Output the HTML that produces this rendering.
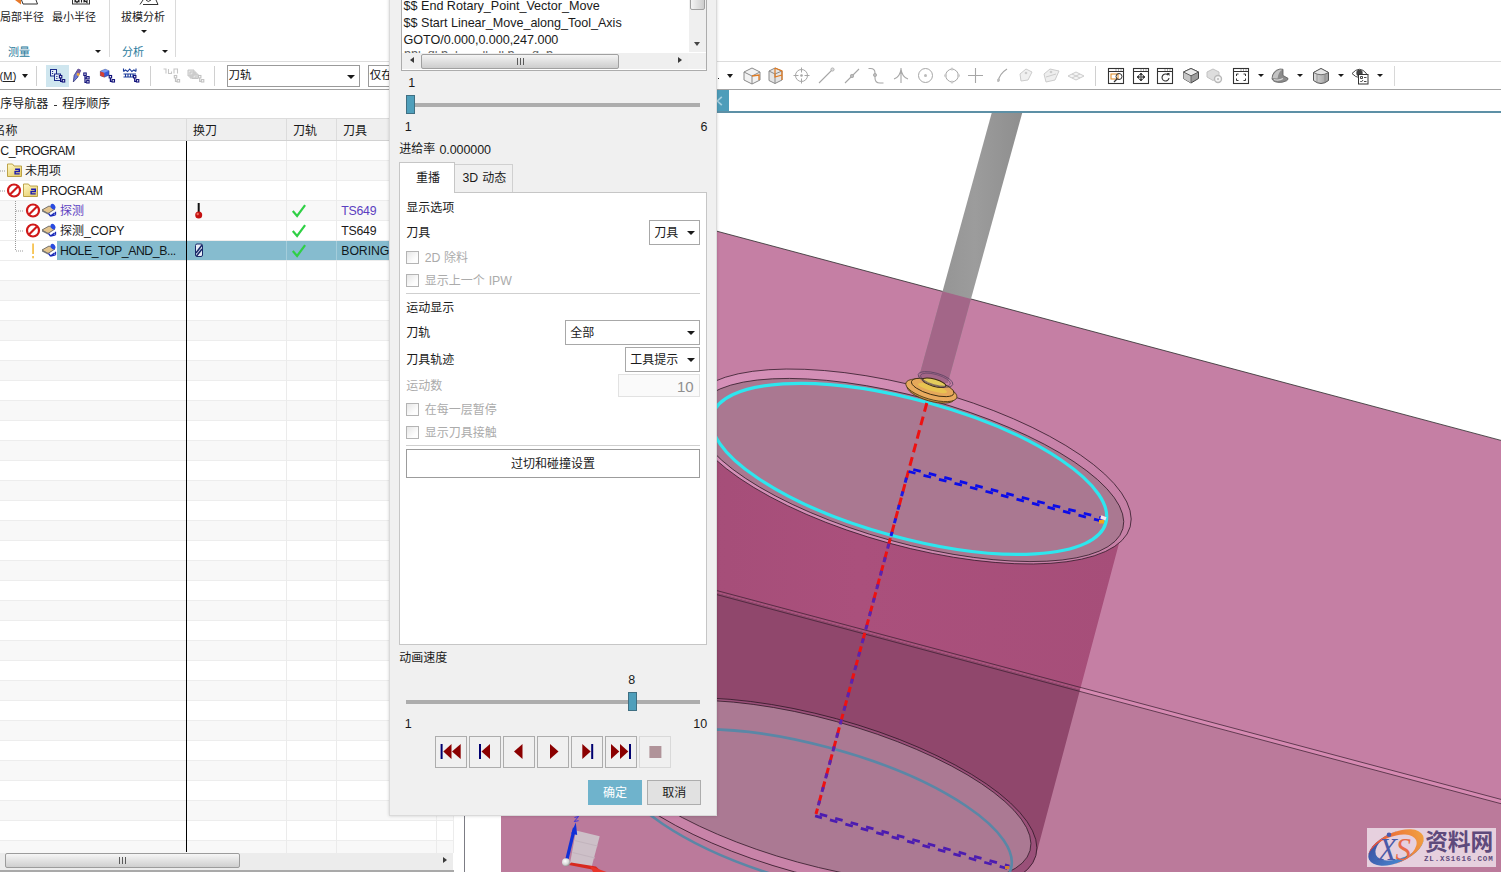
<!DOCTYPE html>
<html><head><meta charset="utf-8"><title>NX CAM</title><style>
html,body{margin:0;padding:0}
body{width:1501px;height:872px;overflow:hidden;position:relative;background:#fff;font-family:"Liberation Sans","Noto Sans CJK SC",sans-serif;font-size:12px;color:#1a1a1a}
.a{position:absolute}
.t{position:absolute;white-space:pre;font-family:"Liberation Sans","Noto Sans CJK SC",sans-serif}
.ov{position:absolute;left:0;top:0;pointer-events:none;overflow:visible}
</style></head><body><svg class="a" style="left:455px;top:113px" width="1046" height="759" viewBox="455 113 1046 759"><defs><clipPath id="cpA"><polygon points="455,522.8 1501,801.4 1501,113 455,113"/></clipPath><clipPath id="cpB"><polygon points="455,522.8 1501,801.4 1501,872 455,872"/></clipPath><clipPath id="cpPlane"><polygon points="501,173.6 1501,440.4 1501,872 501,872"/></clipPath><linearGradient id="gShank" x1="0" y1="0" x2="1" y2="0"><stop offset="0" stop-color="#909090"/><stop offset="0.55" stop-color="#9c9c9c"/><stop offset="1" stop-color="#8e8e8e"/></linearGradient><linearGradient id="gWall" x1="0" y1="0" x2="1" y2="0"><stop offset="0" stop-color="#a24c76"/><stop offset="0.5" stop-color="#aa507c"/><stop offset="1" stop-color="#a64e79"/></linearGradient></defs><rect x="455" y="113" width="1046" height="759" fill="#fff"/><polygon points="501,173.6 1501,440.4 1501,872 501,872" fill="#c57fa4"/><polygon points="501,535.1 1501,801.4 1501,872 501,872" fill="#bb7a9b"/><polygon points="501,533.1 1501,799.4 1501,803.7 501,537.1" fill="#d68ab2"/><polygon points="594.1,743.3 594.2,740.5 594.5,737.7 595.1,735.0 696.5,411.3 697.3,408.9 698.4,406.5 699.7,404.3 701.3,402.1 703.1,400.0 705.2,398.0 707.6,396.0 710.1,394.2 713.0,392.4 716.0,390.8 719.3,389.2 722.8,387.8 726.6,386.4 730.6,385.2 734.8,384.0 739.2,383.0 743.8,382.0 748.6,381.2 753.6,380.5 758.9,379.8 764.2,379.3 769.8,378.9 775.6,378.7 781.5,378.5 787.5,378.4 800.1,378.6 806.6,378.9 813.2,379.3 819.9,379.8 826.7,380.4 833.7,381.1 840.7,381.9 847.8,382.8 855.0,383.9 862.2,385.0 869.6,386.3 876.9,387.6 884.3,389.0 899.2,392.2 906.7,394.0 914.1,395.8 921.6,397.7 929.1,399.7 936.5,401.8 943.9,404.0 951.2,406.2 965.8,411.0 973.0,413.5 980.1,416.0 987.1,418.6 994.0,421.3 1000.8,424.0 1007.5,426.8 1014.1,429.7 1026.9,435.5 1039.1,441.5 1044.9,444.6 1050.7,447.7 1056.2,450.8 1061.5,453.9 1066.7,457.1 1071.7,460.2 1076.5,463.4 1081.1,466.6 1085.4,469.8 1089.6,473.0 1093.5,476.2 1097.2,479.4 1100.7,482.5 1104.0,485.7 1107.0,488.8 1109.8,492.0 1112.3,495.1 1114.6,498.1 1116.6,501.1 1118.4,504.1 1119.9,507.1 1121.2,510.0 1122.2,512.8 1123.0,515.6 1123.5,518.4 1123.7,521.0 1123.7,523.7 1123.4,526.2 1122.9,528.7 1035.9,855.6 1035.0,858.2 1033.9,860.8 1032.5,863.3 1030.8,865.7 1028.9,868.0 1026.7,870.2 1024.3,872.3 1021.6,874.4 1018.6,876.3 1015.4,878.2 1012.0,879.9 1008.3,881.5 1004.4,883.1 1000.3,884.5 995.9,885.8 991.3,887.0 986.5,888.1 981.5,889.1 976.3,890.0 970.9,890.7 965.3,891.4 959.5,891.9 953.5,892.3 947.4,892.6 941.1,892.7 934.7,892.8 928.1,892.7 921.4,892.5 914.5,892.2 907.6,891.8 893.3,890.6 886.0,889.8 878.6,888.9 871.2,887.9 863.7,886.8 848.5,884.2 840.8,882.7 833.1,881.2 825.4,879.5 817.7,877.8 810.0,875.9 794.5,871.9 779.2,867.5 771.6,865.2 756.6,860.3 749.2,857.7 741.9,855.0 734.6,852.3 727.5,849.5 720.4,846.6 713.5,843.7 706.7,840.7 700.1,837.7 693.5,834.6 687.2,831.5 680.9,828.3 674.9,825.1 669.0,821.8 663.3,818.5 657.8,815.2 652.5,811.9 647.3,808.5 642.4,805.1 637.7,801.7 633.2,798.3 628.9,794.9 624.9,791.5 621.1,788.1 617.5,784.8 614.2,781.4 611.1,778.0 608.2,774.7 605.6,771.4 603.3,768.1 601.2,764.8 599.4,761.6 597.9,758.5 596.6,755.3 595.6,752.2 594.8,749.2 594.3,746.3" fill="url(#gWall)" clip-path="url(#cpA)"/><polygon points="594.1,743.3 594.2,740.5 594.5,737.7 595.1,735.0 696.5,411.3 697.3,408.9 698.4,406.5 699.7,404.3 701.3,402.1 703.1,400.0 705.2,398.0 707.6,396.0 710.1,394.2 713.0,392.4 716.0,390.8 719.3,389.2 722.8,387.8 726.6,386.4 730.6,385.2 734.8,384.0 739.2,383.0 743.8,382.0 748.6,381.2 753.6,380.5 758.9,379.8 764.2,379.3 769.8,378.9 775.6,378.7 781.5,378.5 787.5,378.4 800.1,378.6 806.6,378.9 813.2,379.3 819.9,379.8 826.7,380.4 833.7,381.1 840.7,381.9 847.8,382.8 855.0,383.9 862.2,385.0 869.6,386.3 876.9,387.6 884.3,389.0 899.2,392.2 906.7,394.0 914.1,395.8 921.6,397.7 929.1,399.7 936.5,401.8 943.9,404.0 951.2,406.2 965.8,411.0 973.0,413.5 980.1,416.0 987.1,418.6 994.0,421.3 1000.8,424.0 1007.5,426.8 1014.1,429.7 1026.9,435.5 1039.1,441.5 1044.9,444.6 1050.7,447.7 1056.2,450.8 1061.5,453.9 1066.7,457.1 1071.7,460.2 1076.5,463.4 1081.1,466.6 1085.4,469.8 1089.6,473.0 1093.5,476.2 1097.2,479.4 1100.7,482.5 1104.0,485.7 1107.0,488.8 1109.8,492.0 1112.3,495.1 1114.6,498.1 1116.6,501.1 1118.4,504.1 1119.9,507.1 1121.2,510.0 1122.2,512.8 1123.0,515.6 1123.5,518.4 1123.7,521.0 1123.7,523.7 1123.4,526.2 1122.9,528.7 1035.9,855.6 1035.0,858.2 1033.9,860.8 1032.5,863.3 1030.8,865.7 1028.9,868.0 1026.7,870.2 1024.3,872.3 1021.6,874.4 1018.6,876.3 1015.4,878.2 1012.0,879.9 1008.3,881.5 1004.4,883.1 1000.3,884.5 995.9,885.8 991.3,887.0 986.5,888.1 981.5,889.1 976.3,890.0 970.9,890.7 965.3,891.4 959.5,891.9 953.5,892.3 947.4,892.6 941.1,892.7 934.7,892.8 928.1,892.7 921.4,892.5 914.5,892.2 907.6,891.8 893.3,890.6 886.0,889.8 878.6,888.9 871.2,887.9 863.7,886.8 848.5,884.2 840.8,882.7 833.1,881.2 825.4,879.5 817.7,877.8 810.0,875.9 794.5,871.9 779.2,867.5 771.6,865.2 756.6,860.3 749.2,857.7 741.9,855.0 734.6,852.3 727.5,849.5 720.4,846.6 713.5,843.7 706.7,840.7 700.1,837.7 693.5,834.6 687.2,831.5 680.9,828.3 674.9,825.1 669.0,821.8 663.3,818.5 657.8,815.2 652.5,811.9 647.3,808.5 642.4,805.1 637.7,801.7 633.2,798.3 628.9,794.9 624.9,791.5 621.1,788.1 617.5,784.8 614.2,781.4 611.1,778.0 608.2,774.7 605.6,771.4 603.3,768.1 601.2,764.8 599.4,761.6 597.9,758.5 596.6,755.3 595.6,752.2 594.8,749.2 594.3,746.3" fill="#90476c" clip-path="url(#cpB)"/><line x1="501" y1="533.1" x2="1501" y2="799.4" stroke="#3a1f30" stroke-width="0.9" opacity="0.8"/><line x1="501" y1="537.1" x2="1501" y2="803.7" stroke="#3a1f30" stroke-width="0.9" opacity="0.8"/><defs><linearGradient id="gRB" gradientUnits="userSpaceOnUse" x1="900" y1="700" x2="800" y2="880"><stop offset="0" stop-color="#9a5079"/><stop offset="0.55" stop-color="#9a5079"/><stop offset="0.85" stop-color="#c883a8"/><stop offset="1" stop-color="#c883a8"/></linearGradient></defs><ellipse cx="815.5" cy="795.3" rx="228.5" ry="79.4" transform="rotate(15.30 815.5 795.3)" fill="url(#gRB)" stroke="#2a1522" stroke-width="0.7"/><ellipse cx="816.9" cy="791.8" rx="221.1" ry="72.9" transform="rotate(15.40 816.9 791.8)" fill="#ab7993" stroke="#2a1522" stroke-width="0.7"/><ellipse cx="814.3" cy="814.9" rx="203.9" ry="68.8" transform="rotate(15.30 814.3 814.9)" fill="none" stroke="#5a87a6" stroke-width="2.6"/><defs><linearGradient id="gCh" gradientUnits="userSpaceOnUse" x1="700" y1="0" x2="1130" y2="0"><stop offset="0" stop-color="#d590b8"/><stop offset="0.45" stop-color="#d18cb3"/><stop offset="0.8" stop-color="#c882a9"/><stop offset="1" stop-color="#c680a6"/></linearGradient></defs><ellipse cx="909.8" cy="466.5" rx="228.5" ry="79.4" transform="rotate(15.30 909.8 466.5)" fill="url(#gCh)" stroke="#2a1522" stroke-width="0.7"/><ellipse cx="909.7" cy="470.0" rx="221.1" ry="72.9" transform="rotate(15.40 909.7 470.0)" fill="#aa7891" stroke="#2a1522" stroke-width="0.7"/><ellipse cx="909.2" cy="468.9" rx="203.9" ry="68.8" transform="rotate(15.30 909.2 468.9)" fill="none" stroke="#2ee6ee" stroke-width="3.2"/><line x1="501" y1="173.6" x2="1501" y2="440.4" stroke="#2b2b2b" stroke-width="0.8"/><polygon points="991.7,113 1022.2,113 947.8,383 917.3,383" fill="url(#gShank)"/><polygon points="991.7,113 1022.2,113 947.8,383 917.3,383" fill="#a36688" clip-path="url(#cpPlane)"/><line x1="926.8" y1="403" x2="816" y2="814" stroke="#ee1111" stroke-width="3" stroke-dasharray="9 5"/><line x1="908.5" y1="470" x2="891" y2="536" stroke="#1a1ae6" stroke-width="3" stroke-dasharray="5 9" stroke-dashoffset="-8"/><line x1="891" y1="536" x2="816" y2="814" stroke="#5a22b0" stroke-width="3" stroke-dasharray="5 9" stroke-dashoffset="-8"/><line x1="909.4" y1="468.5" x2="1104.9" y2="518.7" stroke="#0c0ce8" stroke-width="2.8" stroke-dasharray="7.7 8.3" stroke-dashoffset="-4.0"/><line x1="908.6" y1="471.5" x2="1104.1" y2="521.7" stroke="#0c0ce8" stroke-width="2.8" stroke-dasharray="7.7 8.3" stroke-dashoffset="0.6"/><line x1="815.9" y1="813.1" x2="1009.4" y2="866.1" stroke="#4c1cb0" stroke-width="2.8" stroke-dasharray="7.7 8.3" stroke-dashoffset="-4.0"/><line x1="815.1" y1="815.9" x2="1008.6" y2="868.9" stroke="#4c1cb0" stroke-width="2.8" stroke-dasharray="7.7 8.3" stroke-dashoffset="0.6"/><g transform="rotate(16 931.3 390.5)"><ellipse cx="931.3" cy="392.6" rx="24.500" ry="8.500" fill="#c8903e" stroke="#4a3a18" stroke-width="0.8"/><ellipse cx="931.3" cy="390.3" rx="26.500" ry="9" fill="#e8aa5e" stroke="#4a3a18" stroke-width="0.8"/><ellipse cx="931.8" cy="387.2" rx="22" ry="7.200" fill="#e6a85a" stroke="#3a2a10" stroke-width="0.9"/><ellipse cx="931.8" cy="387.800" rx="15" ry="3.200" fill="#e8c850" opacity="0.85"/><ellipse cx="932" cy="382.300" rx="12" ry="3.600" fill="#e4cc5c" stroke="#3a2a10" stroke-width="1"/><ellipse cx="932.300" cy="378.700" rx="18" ry="6.300" fill="none" stroke="#54405e" stroke-opacity="0.8" stroke-width="0.9"/><ellipse cx="932.300" cy="379" rx="15.500" ry="5.200" fill="none" stroke="#54405e" stroke-opacity="0.7" stroke-width="0.8"/></g><rect x="1100.500" y="516" width="5.500" height="3.500" fill="#f6e4ee" transform="rotate(20 1103 518)"/><rect x="1099" y="520" width="5" height="3.500" fill="#f2a818"/><rect x="1005" y="866" width="4" height="3" fill="#d08030"/><polygon points="576,830.6 599.7,836.3 591.6,867 569.9,864" fill="#cdc0c8"/><path d="M574.5 840.5 L597.5 846 M572.5 852.5 L595 858" stroke="#c2b4bd" stroke-width="1.2"/><path d="M569 865 L592 869.5 L604 874 L596 866.5 L571 862.5z" fill="#d8281e"/><path d="M590 866 L612 874 L594 874z" fill="#e8342a"/><path d="M566.5 861 L574.5 828" stroke="#1030d8" stroke-width="3.2"/><path d="M571.2 833.5 L575.8 822.5 L577.2 835z" fill="#1030d8"/><path d="M574.5 817.5 l4 -1 l-4.2 5 l4.3 -0.8" fill="none" stroke="#2a2ae8" stroke-width="0.9"/><defs><radialGradient id="gBall" cx="0.4" cy="0.35" r="0.7"><stop offset="0" stop-color="#ffffff"/><stop offset="0.6" stop-color="#d8d8d8"/><stop offset="1" stop-color="#8a8a8a"/></radialGradient></defs><circle cx="566" cy="862.3" r="4" fill="url(#gBall)"/><rect x="1367" y="828" width="129" height="39" fill="#e6d0de"/><defs><mask id="mB" maskUnits="userSpaceOnUse" x="-40" y="-30" width="80" height="60"><rect x="-40" y="-30" width="80" height="60" fill="#fff"/><ellipse cx="5" cy="-1.4" rx="26.3" ry="13.4" fill="#000"/></mask><mask id="mO" maskUnits="userSpaceOnUse" x="-40" y="-30" width="80" height="60"><rect x="-40" y="-30" width="80" height="60" fill="#fff"/><ellipse cx="-5" cy="1.4" rx="26.3" ry="13.4" fill="#000"/></mask><linearGradient id="gBl" x1="0" y1="0" x2="1" y2="1"><stop offset="0" stop-color="#3b4a9c"/><stop offset="1" stop-color="#4a9ae0"/></linearGradient><linearGradient id="gOr" x1="0" y1="0" x2="1" y2="0"><stop offset="0" stop-color="#e8403a"/><stop offset="0.6" stop-color="#ee7a3a"/><stop offset="1" stop-color="#f0a040"/></linearGradient></defs><g transform="translate(1396 847.5) rotate(-24)"><ellipse cx="0" cy="0" rx="29.5" ry="15" fill="url(#gBl)" mask="url(#mB)"/><ellipse cx="0" cy="0" rx="29.5" ry="15" fill="url(#gOr)" mask="url(#mO)"/></g><circle cx="1389" cy="834.800" r="2.300" fill="#4a5ab0"/></svg><span class="t" style="left:1425.2px;top:831.3px;font-size:22.7px;line-height:22.7px;font-weight:bold;color:#5e4a7c">资料网</span><span class="t" style="left:1378px;top:834px;font-family:'Liberation Serif',serif;font-style:italic;font-size:31px;line-height:32px;color:#4a5aa8">X</span><span class="t" style="left:1395.5px;top:834px;font-family:'Liberation Serif',serif;font-style:italic;font-size:31px;line-height:32px;color:#e86a48">S</span><span class="t" style="left:1424px;top:855px;font-family:'Liberation Mono',monospace;font-weight:bold;font-size:7.5px;line-height:8px;letter-spacing:0.85px;color:#5e4a7c">ZL.XS1616.COM</span><div class="a" style="left:0px;top:0px;width:390px;height:61px;background:#fff;"></div><div class="a" style="left:109px;top:0px;width:1px;height:57px;background:#dadada;"></div><div class="a" style="left:175px;top:0px;width:1px;height:57px;background:#dadada;"></div><div class="a" style="left:140.5px;top:30px;width:0;height:0;border-left:3px solid transparent;border-right:3px solid transparent;border-top:3px solid #1a1a1a"></div><div class="a" style="left:94.5px;top:49.8px;width:0;height:0;border-left:3px solid transparent;border-right:3px solid transparent;border-top:3px solid #1a1a1a"></div><div class="a" style="left:161.5px;top:49.8px;width:0;height:0;border-left:3px solid transparent;border-right:3px solid transparent;border-top:3px solid #1a1a1a"></div><svg class="a" style="left:0;top:0" width="200" height="6" viewBox="0 0 200 6"><path d="M15 0 L21 4.5 L21 0Z" fill="#e8792a"/><path d="M21.5 0 L23 4 L37.5 4 L36 0" fill="none" stroke="#333" stroke-width="1"/><rect x="72.5" y="-2" width="17" height="6" fill="#fff" stroke="#333" stroke-width="1"/><path d="M75 0v2.6M75 0l2 2.6 2-2.6v2.6M81.5 0v2.6M84 2.6V0l3 2.6V0" stroke="#222" stroke-width="1.1" fill="none"/><path d="M140 4.5 L143 0 M143 4.5 H158 L156 0 M146 0 q2 3 5 0" fill="none" stroke="#333" stroke-width="1"/></svg><div class="a" style="left:0px;top:61px;width:390px;height:1px;background:#dcdcdc;"></div><div class="a" style="left:0px;top:62px;width:390px;height:27px;background:#fff;"></div><div class="a" style="left:0px;top:89px;width:390px;height:1px;background:#a3a3a3;"></div><div class="a" style="left:2.5px;top:81px;width:12.5px;height:1px;background:#222;"></div><div class="a" style="left:22px;top:73.5px;width:0;height:0;border-left:3.5px solid transparent;border-right:3.5px solid transparent;border-top:4px solid #1a1a1a"></div><div class="a" style="left:36px;top:66px;width:1px;height:20px;background:#d0d0d0;"></div><div class="a" style="left:46px;top:65px;width:23px;height:22px;background:#cfe6ef;"></div><div class="a" style="left:150px;top:66px;width:1px;height:20px;background:#d0d0d0;"></div><div class="a" style="left:214px;top:66px;width:1px;height:20px;background:#d0d0d0;"></div><div class="a" style="left:227px;top:65px;width:133px;height:22px;background:#fff;border:1px solid #9a9a9a;box-sizing:border-box;"></div><div class="a" style="left:347.3px;top:75px;width:0;height:0;border-left:4px solid transparent;border-right:4px solid transparent;border-top:4px solid #1a1a1a"></div><div class="a" style="left:368px;top:65px;width:30px;height:22px;background:#fff;border:1px solid #9a9a9a;box-sizing:border-box;"></div><div class="a" style="left:0px;top:90px;width:390px;height:28px;background:#fff;"></div><div class="a" style="left:53.8px;top:105px;width:3px;height:1px;background:#333;"></div><div class="a" style="left:0px;top:118px;width:455px;height:1px;background:#dcdcdc;"></div><div class="a" style="left:0px;top:119px;width:455px;height:21px;background:#efefef;"></div><div class="a" style="left:0px;top:140px;width:455px;height:1px;background:#d2d2d2;"></div><div class="a" style="left:186px;top:119px;width:1px;height:21px;background:#dcdcdc;"></div><div class="a" style="left:286px;top:119px;width:1px;height:21px;background:#dcdcdc;"></div><div class="a" style="left:336px;top:119px;width:1px;height:21px;background:#dcdcdc;"></div><div class="a" style="left:436px;top:119px;width:1px;height:21px;background:#dcdcdc;"></div><div class="a" style="left:0px;top:160px;width:453px;height:1px;background:#ededed;"></div><div class="a" style="left:0px;top:161px;width:453px;height:19px;background:#f8f8f8;"></div><div class="a" style="left:0px;top:180px;width:453px;height:1px;background:#ededed;"></div><div class="a" style="left:0px;top:200px;width:453px;height:1px;background:#ededed;"></div><div class="a" style="left:0px;top:201px;width:453px;height:19px;background:#f8f8f8;"></div><div class="a" style="left:0px;top:220px;width:453px;height:1px;background:#ededed;"></div><div class="a" style="left:0px;top:240px;width:453px;height:1px;background:#ededed;"></div><div class="a" style="left:0px;top:260px;width:453px;height:1px;background:#ededed;"></div><div class="a" style="left:0px;top:280px;width:453px;height:1px;background:#ededed;"></div><div class="a" style="left:0px;top:281px;width:453px;height:19px;background:#f8f8f8;"></div><div class="a" style="left:0px;top:300px;width:453px;height:1px;background:#ededed;"></div><div class="a" style="left:0px;top:320px;width:453px;height:1px;background:#ededed;"></div><div class="a" style="left:0px;top:321px;width:453px;height:19px;background:#f8f8f8;"></div><div class="a" style="left:0px;top:340px;width:453px;height:1px;background:#ededed;"></div><div class="a" style="left:0px;top:360px;width:453px;height:1px;background:#ededed;"></div><div class="a" style="left:0px;top:361px;width:453px;height:19px;background:#f8f8f8;"></div><div class="a" style="left:0px;top:380px;width:453px;height:1px;background:#ededed;"></div><div class="a" style="left:0px;top:400px;width:453px;height:1px;background:#ededed;"></div><div class="a" style="left:0px;top:401px;width:453px;height:19px;background:#f8f8f8;"></div><div class="a" style="left:0px;top:420px;width:453px;height:1px;background:#ededed;"></div><div class="a" style="left:0px;top:440px;width:453px;height:1px;background:#ededed;"></div><div class="a" style="left:0px;top:441px;width:453px;height:19px;background:#f8f8f8;"></div><div class="a" style="left:0px;top:460px;width:453px;height:1px;background:#ededed;"></div><div class="a" style="left:0px;top:480px;width:453px;height:1px;background:#ededed;"></div><div class="a" style="left:0px;top:481px;width:453px;height:19px;background:#f8f8f8;"></div><div class="a" style="left:0px;top:500px;width:453px;height:1px;background:#ededed;"></div><div class="a" style="left:0px;top:520px;width:453px;height:1px;background:#ededed;"></div><div class="a" style="left:0px;top:521px;width:453px;height:19px;background:#f8f8f8;"></div><div class="a" style="left:0px;top:540px;width:453px;height:1px;background:#ededed;"></div><div class="a" style="left:0px;top:560px;width:453px;height:1px;background:#ededed;"></div><div class="a" style="left:0px;top:561px;width:453px;height:19px;background:#f8f8f8;"></div><div class="a" style="left:0px;top:580px;width:453px;height:1px;background:#ededed;"></div><div class="a" style="left:0px;top:600px;width:453px;height:1px;background:#ededed;"></div><div class="a" style="left:0px;top:601px;width:453px;height:19px;background:#f8f8f8;"></div><div class="a" style="left:0px;top:620px;width:453px;height:1px;background:#ededed;"></div><div class="a" style="left:0px;top:640px;width:453px;height:1px;background:#ededed;"></div><div class="a" style="left:0px;top:641px;width:453px;height:19px;background:#f8f8f8;"></div><div class="a" style="left:0px;top:660px;width:453px;height:1px;background:#ededed;"></div><div class="a" style="left:0px;top:680px;width:453px;height:1px;background:#ededed;"></div><div class="a" style="left:0px;top:681px;width:453px;height:19px;background:#f8f8f8;"></div><div class="a" style="left:0px;top:700px;width:453px;height:1px;background:#ededed;"></div><div class="a" style="left:0px;top:720px;width:453px;height:1px;background:#ededed;"></div><div class="a" style="left:0px;top:721px;width:453px;height:19px;background:#f8f8f8;"></div><div class="a" style="left:0px;top:740px;width:453px;height:1px;background:#ededed;"></div><div class="a" style="left:0px;top:760px;width:453px;height:1px;background:#ededed;"></div><div class="a" style="left:0px;top:761px;width:453px;height:19px;background:#f8f8f8;"></div><div class="a" style="left:0px;top:780px;width:453px;height:1px;background:#ededed;"></div><div class="a" style="left:0px;top:800px;width:453px;height:1px;background:#ededed;"></div><div class="a" style="left:0px;top:801px;width:453px;height:19px;background:#f8f8f8;"></div><div class="a" style="left:0px;top:820px;width:453px;height:1px;background:#ededed;"></div><div class="a" style="left:0px;top:840px;width:453px;height:1px;background:#ededed;"></div><div class="a" style="left:0px;top:841px;width:453px;height:12px;background:#f8f8f8;"></div><div class="a" style="left:57px;top:241px;width:396px;height:19px;background:#86bccf;"></div><div class="a" style="left:286px;top:141px;width:1px;height:712px;background:#ebebeb;"></div><div class="a" style="left:336px;top:141px;width:1px;height:712px;background:#ebebeb;"></div><div class="a" style="left:436px;top:141px;width:1px;height:712px;background:#ebebeb;"></div><div class="a" style="left:286px;top:241px;width:1px;height:19px;background:#a4cddb;"></div><div class="a" style="left:336px;top:241px;width:1px;height:19px;background:#a4cddb;"></div><div class="a" style="left:453px;top:141px;width:1px;height:712px;background:#ececec;"></div><div class="a" style="left:186px;top:141px;width:1.3px;height:711px;background:#000;"></div><div class="a" style="left:0px;top:853px;width:453px;height:17.5px;background:#ececec;"></div><div class="a" style="left:5px;top:853px;width:235px;height:15px;box-sizing:border-box;border:1px solid #9c9c9c;border-radius:2px;background:linear-gradient(#f6f6f6,#e2e2e2 50%,#cfcfcf)"></div><div class="a" style="left:118.5px;top:857px;width:1px;height:7px;background:#5a5a5a;"></div><div class="a" style="left:121.5px;top:857px;width:1px;height:7px;background:#5a5a5a;"></div><div class="a" style="left:124.5px;top:857px;width:1px;height:7px;background:#5a5a5a;"></div><div class="a" style="left:442.5px;top:857px;width:0;height:0;border-top:3.7px solid transparent;border-bottom:3.7px solid transparent;border-left:4.2px solid #3a3a3a"></div><div class="a" style="left:0px;top:870.3px;width:454.5px;height:1.7px;background:#a9a9a9;"></div><div class="a" style="left:454px;top:815px;width:11px;height:57px;background:#fff;"></div><div class="a" style="left:464.2px;top:815px;width:1px;height:57px;background:#7c7c84;"></div><div class="a" style="left:465.2px;top:815px;width:35.8px;height:57px;background:#fff;"></div><svg class="a" style="left:0;top:0" width="455" height="872" viewBox="0 0 455 872"><defs><linearGradient id="gFold" x1="0" y1="0" x2="0.6" y2="1"><stop offset="0" stop-color="#fff9c8"/><stop offset="1" stop-color="#e9d272"/></linearGradient></defs><path d="M15.5 201 V251 M16 211 H23 M16 231 H23 M16 251 H23 M0 171 H5 M0 191 H5" stroke="#9a9a9a" stroke-width="1" stroke-dasharray="1 1" fill="none"/><path d="M7.5 164 h5 l1.5 2 h7.5 v10.500 h-14z" fill="url(#gFold)" stroke="#b59a3a" stroke-width="0.9"/><path d="M15.1 169.2 h4.2 v2.3 h-4.2 v2.4 h4.6" fill="none" stroke="#1a1ab0" stroke-width="1.4"/><circle cx="14" cy="190.5" r="6" fill="#fff" stroke="#d01818" stroke-width="2.2"/><line x1="10" y1="194.5" x2="18" y2="186.5" stroke="#d01818" stroke-width="2.2"/><path d="M23.5 184 h5 l1.5 2 h7.5 v10.500 h-14z" fill="url(#gFold)" stroke="#b59a3a" stroke-width="0.9"/><path d="M31.1 189.2 h4.2 v2.3 h-4.2 v2.4 h4.6" fill="none" stroke="#1a1ab0" stroke-width="1.4"/><circle cx="33" cy="210.5" r="6" fill="#fff" stroke="#d01818" stroke-width="2.2"/><line x1="29" y1="214.5" x2="37" y2="206.5" stroke="#d01818" stroke-width="2.2"/><path d="M42 210 l7 -4 l6 3 l-7 4.5z" fill="#e3c48e" stroke="#555" stroke-width="0.8"/><path d="M42 210 l6 3 v1.6 l-6 -3z" fill="#777"/><ellipse cx="53" cy="206.6" rx="2.2" ry="3" fill="#2a4be0" transform="rotate(-30 53 206.6)"/><path d="M54.5 213 l-4 3 M50.5 216 l5 -1.2 M50.5 216 l-2 -2.5 M55.5 214.8 v-3" stroke="#1a2ab8" stroke-width="1.3" fill="none"/><circle cx="33" cy="230.5" r="6" fill="#fff" stroke="#d01818" stroke-width="2.2"/><line x1="29" y1="234.5" x2="37" y2="226.5" stroke="#d01818" stroke-width="2.2"/><path d="M42 230 l7 -4 l6 3 l-7 4.5z" fill="#e3c48e" stroke="#555" stroke-width="0.8"/><path d="M42 230 l6 3 v1.6 l-6 -3z" fill="#777"/><ellipse cx="53" cy="226.6" rx="2.2" ry="3" fill="#2a4be0" transform="rotate(-30 53 226.6)"/><path d="M54.5 233 l-4 3 M50.5 236 l5 -1.2 M50.5 236 l-2 -2.5 M55.5 234.8 v-3" stroke="#1a2ab8" stroke-width="1.3" fill="none"/><rect x="32.200" y="243.5" width="1.700" height="10.5" fill="#f6bf48"/><rect x="32.200" y="256" width="1.700" height="2.300" fill="#f6bf48"/><path d="M42 250 l7 -4 l6 3 l-7 4.5z" fill="#e3c48e" stroke="#555" stroke-width="0.8"/><path d="M42 250 l6 3 v1.6 l-6 -3z" fill="#777"/><ellipse cx="53" cy="246.6" rx="2.2" ry="3" fill="#2a4be0" transform="rotate(-30 53 246.6)"/><path d="M54.5 253 l-4 3 M50.5 256 l5 -1.2 M50.5 256 l-2 -2.5 M55.5 254.8 v-3" stroke="#1a2ab8" stroke-width="1.3" fill="none"/><rect x="197.7" y="203" width="2" height="10" fill="#111"/><circle cx="198.7" cy="215" r="3.5" fill="#c41010"/><circle cx="197.7" cy="214" r="1.2" fill="#f06a5a"/><rect x="195.5" y="244" width="7" height="12.5" rx="1.5" fill="#e8eef8" stroke="#1a2a6a" stroke-width="1"/><path d="M196 253 L202 245 M196.5 256 L202 249" stroke="#1a2a6a" stroke-width="1.6"/><path d="M292.8 211 l4.3 5 l8 -10.8" fill="none" stroke="#2fd045" stroke-width="2.2" stroke-linejoin="miter"/><path d="M292.8 231 l4.3 5 l8 -10.8" fill="none" stroke="#2fd045" stroke-width="2.2" stroke-linejoin="miter"/><path d="M292.8 251 l4.3 5 l8 -10.8" fill="none" stroke="#2fd045" stroke-width="2.2" stroke-linejoin="miter"/><rect x="50.5" y="69.5" width="6" height="6.5" fill="#e4ecf6" stroke="#1a2a8a" stroke-width="1"/><rect x="54.5" y="74" width="6" height="6.5" fill="#e4ecf6" stroke="#1a2a8a" stroke-width="1"/><path d="M52.5 71.5 h0.1 M52.5 73.5 h0.1 M56.8 76.500 h0.1 M56.8 78.500 h0.1" stroke="#1a2a8a" stroke-width="1.1" stroke-linecap="square"/><rect x="59.4" y="75.5" width="2.4" height="2.4" fill="#fff" stroke="#10107a" stroke-width="1.1"/><path d="M60.6 77.9 v3.4 h1.6" fill="none" stroke="#10107a" stroke-width="1.2"/><rect x="62.3" y="79.6" width="2.4" height="2.4" fill="#fff" stroke="#10107a" stroke-width="1.1"/><path d="M73.3 82 l0.8 -6.5 l4 -6.5 l2.600 1.300 l-3 7 z" fill="#6a78d8" stroke="#2a2a6a" stroke-width="0.7"/><path d="M78.2 69 l2.600 1.300 l-1.800 4.200 l-2.800 -1.500z" fill="#7a5aa0"/><rect x="77" y="73" width="2.600" height="2.600" fill="#f0a838" transform="rotate(25 78 74)"/><rect x="83.8" y="73" width="2.4" height="2.4" fill="#fff" stroke="#10107a" stroke-width="1.1"/><path d="M85 75.4 v7 h1.6 M85 78.2 h1.6" fill="none" stroke="#10107a" stroke-width="1.2"/><rect x="86.7" y="76.6" width="2.4" height="2.4" fill="#fff" stroke="#10107a" stroke-width="1.1"/><rect x="86.7" y="80.6" width="2.4" height="2.4" fill="#fff" stroke="#10107a" stroke-width="1.1"/><path d="M100.3 71.2 l4.800 -2 l4 1.500 v4.500 l-4.800 2 l-4 -1.500z" fill="#3a5ad8" stroke="#223a" stroke-width="0.5"/><path d="M100.3 71.2 l4 1.500 v4.500 l-4 -1.500z" fill="#d84030"/><path d="M100.3 71.2 l4.800 -2 l4 1.500 l-4.800 2z" fill="#7a9af0"/><rect x="109.2" y="75.5" width="2.4" height="2.4" fill="#fff" stroke="#10107a" stroke-width="1.1"/><path d="M110.4 77.9 v3.4 h1.6" fill="none" stroke="#10107a" stroke-width="1.2"/><rect x="112.1" y="79.6" width="2.4" height="2.4" fill="#fff" stroke="#10107a" stroke-width="1.1"/><path d="M123.500 68.500 v3 M136 68.500 v3 M123.500 71.500 l2 -1.500 l2.100 1.500 l2.100 -2.500 l2.100 2.500 l2.100 -1.500 l2 1.500 M123.500 74 h12.500 M123.500 77 h12.500 M125.500 74 v3 M128 74 v3 M130.500 74 v3 M133 74 v3" stroke="#1a3a9a" stroke-width="1.1" fill="none"/><rect x="133.5" y="75.5" width="2.4" height="2.4" fill="#fff" stroke="#10107a" stroke-width="1.1"/><path d="M134.7 77.9 v3.4 h1.6" fill="none" stroke="#10107a" stroke-width="1.2"/><rect x="136.4" y="79.6" width="2.4" height="2.4" fill="#fff" stroke="#10107a" stroke-width="1.1"/><path d="M163.500 69 h2.500 v4.500 M168.500 69 v4.500 h3 v-2 M174 73.500 v-4.500 h3.500 v4.500" stroke="#c6c6c6" stroke-width="1.1" fill="none"/><rect x="174.3" y="75.5" width="2.4" height="2.4" fill="none" stroke="#c2c2c2" stroke-width="1.1"/><path d="M175.5 77.9 v3.4 h1.6" fill="none" stroke="#c2c2c2" stroke-width="1.2"/><rect x="177.2" y="79.6" width="2.4" height="2.4" fill="none" stroke="#c2c2c2" stroke-width="1.1"/><path d="M188 70 h6 v6 h-6z M190 72 h6 v6 h-6z M192 74 h6 v4.500 h-6z" fill="#e6e6e6" stroke="#c4c4c4" stroke-width="1"/><rect x="198.5" y="75.5" width="2.4" height="2.4" fill="none" stroke="#c2c2c2" stroke-width="1.1"/><path d="M199.7 77.9 v3.4 h1.6" fill="none" stroke="#c2c2c2" stroke-width="1.2"/><rect x="201.4" y="79.6" width="2.4" height="2.4" fill="none" stroke="#c2c2c2" stroke-width="1.1"/></svg><span class="t" style="left:0.0px;top:11.5px;font-size:11px;line-height:11px;color:#222">局部半径</span><span class="t" style="left:52.0px;top:11.5px;font-size:11px;line-height:11px;color:#222">最小半径</span><span class="t" style="left:121.0px;top:11.5px;font-size:11px;line-height:11px;color:#222">拔模分析</span><span class="t" style="left:8.0px;top:46.5px;font-size:11px;line-height:11px;color:#2a7b9c">测量</span><span class="t" style="left:122.0px;top:46.5px;font-size:11px;line-height:11px;color:#2a7b9c">分析</span><span class="t" style="left:-0.40px;top:69px;font-size:11.00px;line-height:14px;color:#222;letter-spacing:0.10px;">(M)</span><span class="t" style="left:228.5px;top:69.9px;font-size:11.5px;line-height:11.5px;color:#111">刀轨</span><span class="t" style="left:369.8px;top:69.9px;font-size:11.5px;line-height:11.5px;color:#111">仅在</span><span class="t" style="left:0.3px;top:98.4px;font-size:12px;line-height:12px;color:#1a1a1a">序导航器</span><span class="t" style="left:62.3px;top:98.4px;font-size:12px;line-height:12px;color:#1a1a1a">程序顺序</span><span class="t" style="left:-6.5px;top:124.9px;font-size:12px;line-height:12px;color:#1a1a1a">名称</span><span class="t" style="left:193.0px;top:124.9px;font-size:12px;line-height:12px;color:#1a1a1a">换刀</span><span class="t" style="left:293.0px;top:124.9px;font-size:12px;line-height:12px;color:#1a1a1a">刀轨</span><span class="t" style="left:343.0px;top:124.9px;font-size:12px;line-height:12px;color:#1a1a1a">刀具</span><span class="t" style="left:0.30px;top:143px;font-size:12.30px;line-height:16px;color:#1a1a1a;letter-spacing:-0.55px;">C_PROGRAM</span><span class="t" style="left:25.0px;top:164.6px;font-size:12px;line-height:12px;color:#1a1a1a">未用项</span><span class="t" style="left:41.30px;top:183px;font-size:12.30px;line-height:16px;color:#1a1a1a;letter-spacing:-0.30px;">PROGRAM</span><span class="t" style="left:60.0px;top:204.6px;font-size:12px;line-height:12px;color:#5b40c0">探测</span><span class="t" style="left:60.0px;top:224.6px;font-size:12px;line-height:12px;color:#1a1a1a">探测</span><span class="t" style="left:84.00px;top:223px;font-size:12.30px;line-height:16px;color:#1a1a1a;letter-spacing:-0.30px;">_COPY</span><span class="t" style="left:60.00px;top:243px;font-size:12.30px;line-height:16px;color:#10181c;letter-spacing:-0.45px;">HOLE_TOP_AND_B...</span><span class="t" style="left:341.30px;top:203px;font-size:12.30px;line-height:16px;color:#5b40c0;letter-spacing:-0.25px;">TS649</span><span class="t" style="left:341.30px;top:223px;font-size:12.30px;line-height:16px;color:#1a1a1a;letter-spacing:-0.25px;">TS649</span><span class="t" style="left:341.30px;top:243px;font-size:12.30px;line-height:16px;color:#10181c;letter-spacing:-0.10px;">BORING</span><div class="a" style="left:390px;top:0px;width:1111px;height:61px;background:#fff;"></div><div class="a" style="left:390px;top:61px;width:1111px;height:1px;background:#dcdcdc;"></div><div class="a" style="left:390px;top:62px;width:1111px;height:27px;background:#fff;"></div><div class="a" style="left:390px;top:89px;width:1111px;height:1px;background:#a3a3a3;"></div><div class="a" style="left:390px;top:90px;width:1111px;height:21px;background:#fff;"></div><div class="a" style="left:717px;top:90px;width:12px;height:21px;background:#4e9dba;"></div><div class="a" style="left:717px;top:111px;width:784px;height:2px;background:#5d90a6;"></div><div class="a" style="left:717.5px;top:78px;width:1.5px;height:1.3px;background:#222;"></div><div class="a" style="left:727.2px;top:73.5px;width:0;height:0;border-left:3.5px solid transparent;border-right:3.5px solid transparent;border-top:4px solid #1a1a1a"></div><div class="a" style="left:1095px;top:66px;width:1px;height:20px;background:#d0d0d0;"></div><div class="a" style="left:1394px;top:66px;width:1px;height:20px;background:#d8d8d8;"></div><div class="a" style="left:1257.5px;top:73.75px;width:0;height:0;border-left:3px solid transparent;border-right:3px solid transparent;border-top:3.5px solid #1a1a1a"></div><div class="a" style="left:1296.5px;top:73.75px;width:0;height:0;border-left:3px solid transparent;border-right:3px solid transparent;border-top:3.5px solid #1a1a1a"></div><div class="a" style="left:1337.5px;top:73.75px;width:0;height:0;border-left:3px solid transparent;border-right:3px solid transparent;border-top:3.5px solid #1a1a1a"></div><div class="a" style="left:1376.5px;top:73.75px;width:0;height:0;border-left:3px solid transparent;border-right:3px solid transparent;border-top:3.5px solid #1a1a1a"></div><svg class="a" style="left:717px;top:62px;overflow:visible" width="784" height="50" viewBox="717 62 784 50"><path d="M721.8 96.8 L717.3 101 L721.8 105.2" fill="none" stroke="#a4cfdf" stroke-width="1.7"/><path d="M744 72 l8 -4 l8 4 v8 l-8 4 l-8 -4z" fill="#f2f2f2" stroke="#8a8a8a" stroke-width="1"/><path d="M744 72 l8 4 l8 -4 M752 76 v8" fill="none" stroke="#8a8a8a" stroke-width="1"/><path d="M752 76 l7 -1 v5" fill="none" stroke="#e07a20" stroke-width="1.3"/><path d="M769 71 l6 -3 l7 3 v9 l-7 3.5 l-6 -3z" fill="#e4e4e4" stroke="#8a8a8a" stroke-width="1"/><path d="M769 71 l6 3 l7 -3 M775 74 v9.5" fill="none" stroke="#8a8a8a" stroke-width="1"/><path d="M775 68 v9 l7 -2 M775 68 l7 3 v9" fill="none" stroke="#e07a20" stroke-width="1.2"/><circle cx="801.5" cy="75.5" r="6" fill="none" stroke="#a6a6a6" stroke-width="1"/><path d="M801.5 67.5 v5 M801.5 78.5 v5 M793.5 75.5 h5 M804.5 75.5 h5" stroke="#a6a6a6" stroke-width="1"/><circle cx="801.5" cy="75.5" r="1.3" fill="#a6a6a6"/><path d="M819 83 l13 -13" stroke="#a6a6a6" stroke-width="1.1"/><circle cx="832.5" cy="69.5" r="1.6" fill="#ddd" stroke="#a6a6a6" stroke-width="0.8"/><path d="M845 83 l14 -14" stroke="#a6a6a6" stroke-width="1.1"/><circle cx="852" cy="76" r="1.7" fill="#bbb" stroke="#a6a6a6" stroke-width="0.8"/><path d="M868.5 68.5 h2 q4.5 0 4.5 4.5 v5 q0 5 5 5 h3.500" fill="none" stroke="#a6a6a6" stroke-width="1.1"/><circle cx="875" cy="75" r="1.6" fill="#bbb" stroke="#a6a6a6" stroke-width="0.8"/><path d="M901 68 v15 M894 79 q6 -2 7 -10 q1 8 7 10" fill="none" stroke="#a6a6a6" stroke-width="1.1"/><circle cx="925.5" cy="75.5" r="7" fill="none" stroke="#a6a6a6" stroke-width="1"/><circle cx="925.5" cy="75.5" r="1.5" fill="#bbb"/><circle cx="952" cy="75.5" r="6.3" fill="none" stroke="#a6a6a6" stroke-width="1"/><circle cx="952" cy="69" r="1.5" fill="#ccc"/><circle cx="952" cy="82" r="1.5" fill="#ccc"/><circle cx="945.5" cy="75.5" r="1.5" fill="#ccc"/><circle cx="958.5" cy="75.5" r="1.5" fill="#ccc"/><path d="M975.5 68 v15 M968 75.5 h15" stroke="#a6a6a6" stroke-width="1.1"/><path d="M998 82 q1 -8 9 -13" fill="none" stroke="#a6a6a6" stroke-width="1.1"/><circle cx="998.5" cy="80" r="1.5" fill="#bbb"/><path d="M1020 74 l6 -5 l6 3 l-4 8 l-7 1z" fill="#f0f0f0" stroke="#cccccc" stroke-width="1"/><circle cx="1026" cy="73" r="1.3" fill="#cccccc"/><path d="M1044 74 l6 -5 l9 2 l-4 9 l-9 2z M1046 77 l10 -3" fill="#eee" stroke="#cccccc" stroke-width="1"/><circle cx="1051" cy="72" r="1.3" fill="#cccccc"/><path d="M1068 76 l8 -4 l8 4 l-8 4z M1072 74 l8 4 M1080 74 l-8 4" fill="#f4f4f4" stroke="#cccccc" stroke-width="1"/><rect x="1108.5" y="68.5" width="15" height="15" fill="#fff" stroke="#333" stroke-width="1.1"/><path d="M1108.5 71.5 h15" stroke="#333" stroke-width="1"/><path d="M1115.5 70 h1 M1118 70 h1 M1120.5 70 h1" stroke="#333" stroke-width="0.8"/><rect x="1111" y="74" width="7" height="5" fill="none" stroke="#e08a20" stroke-width="1"/><circle cx="1119" cy="76.5" r="3" fill="none" stroke="#333" stroke-width="1"/><path d="M1117 79 l-3 3" stroke="#333" stroke-width="1.2"/><rect x="1133.5" y="68.5" width="15" height="15" fill="#fff" stroke="#333" stroke-width="1.1"/><path d="M1133.5 71.5 h15" stroke="#333" stroke-width="1"/><path d="M1140.5 70 h1 M1143 70 h1 M1145.5 70 h1" stroke="#333" stroke-width="0.8"/><path d="M1141 73.5 v7 M1137.5 77 h7 M1141 73 l-1.5 1.8 h3z M1141 81 l-1.5 -1.8 h3z M1137 77 l1.8 -1.5 v3z M1145 77 l-1.8 -1.5 v3z" stroke="#333" stroke-width="0.9" fill="#333"/><rect x="1157.5" y="68.5" width="15" height="15" fill="#fff" stroke="#333" stroke-width="1.1"/><path d="M1157.5 71.5 h15" stroke="#333" stroke-width="1"/><path d="M1164.5 70 h1 M1167 70 h1 M1169.5 70 h1" stroke="#333" stroke-width="0.8"/><path d="M1168 75 a3.5 3.5 0 1 0 1 3" fill="none" stroke="#333" stroke-width="1.1"/><path d="M1166.5 73 h3 v3z" fill="#333"/><path d="M1183.500 72 l7.500 -3.500 l7.500 3.500 v6.500 l-7.500 4.500 l-7.500 -4.500z" fill="#9c9c9c" stroke="#444" stroke-width="1"/><path d="M1183.500 72 l7.500 3.800 v7.200 l-7.500 -4.500z" fill="#c6c6c6"/><path d="M1183.500 72 l7.500 -3.500 l7.500 3.500 l-7.500 3.800z" fill="#ececec" stroke="#444" stroke-width="0.8"/><path d="M1191 75.800 v7" stroke="#555" stroke-width="0.8"/><path d="M1207 72 l6 -3 l6 3 v5 l-6 3.5 l-6 -3.500z" fill="#ddd" stroke="#c2c2c2" stroke-width="1"/><circle cx="1218" cy="79" r="3.5" fill="#f4f4f4" stroke="#b8b8b8" stroke-width="1.4"/><circle cx="1218" cy="79" r="1" fill="#b8b8b8"/><rect x="1233.5" y="68.5" width="15" height="15" fill="#fff" stroke="#333" stroke-width="1.1"/><path d="M1233.5 71.5 h15" stroke="#333" stroke-width="1"/><path d="M1240.5 70 h1 M1243 70 h1 M1245.5 70 h1" stroke="#333" stroke-width="0.8"/><path d="M1236.500 76 v-2 h2 M1243.500 74 h2 v2 M1245.500 78.500 v2 h-2 M1238.500 80.500 h-2 v-2" fill="none" stroke="#333" stroke-width="1"/><path d="M1272 78.500 q0.500 -8 8 -9.500 l3 0.300 v6.200 l5 2.800 q0.300 1.500 -1.500 2.500 q-4 2.200 -9 1.500 q-5 -0.800 -5.500 -3.800z" fill="#8c8c8c" stroke="#5a5a5a" stroke-width="0.8"/><path d="M1272.500 78 q1 -6.500 7.500 -8.500 l2.500 0.200 q-4 1.500 -5 8.800z" fill="#c4c4c4"/><path d="M1274 79.500 q5 1.500 9 -1" fill="none" stroke="#d8d8d8" stroke-width="1.2"/><defs><linearGradient id="gHx" x1="0" y1="0" x2="1" y2="0"><stop offset="0" stop-color="#dcdcdc"/><stop offset="1" stop-color="#9a9a9a"/></linearGradient></defs><path d="M1313.500 72.500 l7.500 -4 l7.500 4 v8 q-7.500 6 -15 0z" fill="url(#gHx)" stroke="#555" stroke-width="1"/><path d="M1313.500 72.500 l7.500 -4 l7.500 4 q-7.500 4.500 -15 0z" fill="#e6e6e6" stroke="#555" stroke-width="0.8"/><path d="M1317 74.300 v8.500 M1325 74.300 v8.500" stroke="#7a7a7a" stroke-width="0.6"/><path d="M1352 73.500 q7.500 -8.500 14.500 0 q-7 8 -14.500 0z" fill="#fff" stroke="#444" stroke-width="1"/><circle cx="1359.500" cy="73" r="3.200" fill="#444"/><rect x="1358.500" y="74.500" width="9.500" height="9.500" fill="#fff" stroke="#333" stroke-width="1"/><path d="M1360.500 76.500 h2 v2 h-2z M1364 77.500 h2.500 M1360.300 81 l1 1 l1.800 -2 M1364 81.500 h2.500" stroke="#333" stroke-width="0.9" fill="none"/></svg><div class="a" style="left:389px;top:-2px;width:328px;height:818.2px;background:#f0f0f0;box-sizing:border-box;border:1px solid #dadada;box-shadow:0 0 3px rgba(0,0,0,0.18)"></div><div class="a" style="left:401px;top:-2px;width:306px;height:73px;background:#fff;border:1px solid #acacac;box-sizing:border-box;"></div><div class="a" style="left:402px;top:51px;width:286px;height:1.5px;overflow:hidden"><span class="t" style="left:2px;top:-3.6px;font-size:12.6px;line-height:14px;color:#666">bbl  dl b  l       ll   ll b     d  b</span></div><div class="a" style="left:402px;top:53px;width:286px;height:16px;background:#efefef;"></div><div class="a" style="left:421px;top:53.500px;width:197.500px;height:15px;box-sizing:border-box;border:1px solid #a0a0a0;border-radius:2px;background:linear-gradient(#f4f4f4,#e0e0e0 50%,#cdcdcd)"></div><div class="a" style="left:517px;top:57.5px;width:1px;height:7px;background:#5a5a5a;"></div><div class="a" style="left:520px;top:57.5px;width:1px;height:7px;background:#5a5a5a;"></div><div class="a" style="left:523px;top:57.5px;width:1px;height:7px;background:#5a5a5a;"></div><div class="a" style="left:409.5px;top:57px;width:0;height:0;border-top:3.7px solid transparent;border-bottom:3.7px solid transparent;border-right:4.2px solid #3a3a3a"></div><div class="a" style="left:678px;top:57px;width:0;height:0;border-top:3.7px solid transparent;border-bottom:3.7px solid transparent;border-left:4.2px solid #3a3a3a"></div><div class="a" style="left:689px;top:-1px;width:16.5px;height:52.5px;background:#efefef;"></div><div class="a" style="left:689.500px;top:-3px;width:15px;height:12.500px;box-sizing:border-box;border:1px solid #a0a0a0;border-radius:2px;background:linear-gradient(90deg,#f4f4f4,#e0e0e0 50%,#cdcdcd)"></div><div class="a" style="left:693.6px;top:41.7px;width:0;height:0;border-left:3.7px solid transparent;border-right:3.7px solid transparent;border-top:4px solid #444"></div><div class="a" style="left:688px;top:53px;width:18px;height:16px;background:#f0f0f0;"></div><div class="a" style="left:414px;top:103px;width:286px;height:4px;background:#adadad;"></div><div class="a" style="left:406px;top:95px;width:9px;height:19px;background:#4f9fbb;border:1px solid #3f6f82;box-sizing:border-box;"></div><div class="a" style="left:454px;top:164px;width:59px;height:29px;background:#f0f0f0;border:1px solid #d0d0d0;box-sizing:border-box;"></div><div class="a" style="left:399px;top:192px;width:308px;height:452.6px;background:#fff;border:1px solid #c6c6c6;box-sizing:border-box;"></div><div class="a" style="left:399px;top:162px;width:56px;height:31px;background:#fff;box-sizing:border-box;border:1px solid #c6c6c6;border-bottom:none"></div><div class="a" style="left:649px;top:220px;width:51px;height:25px;background:#fff;border:1px solid #a8a8a8;box-sizing:border-box;"></div><div class="a" style="left:686.6px;top:230.7px;width:0;height:0;border-left:4px solid transparent;border-right:4px solid transparent;border-top:4.2px solid #1a1a1a"></div><div class="a" style="left:406px;top:251px;width:13px;height:13px;box-sizing:border-box;border:1px solid #b4b4b4;background:linear-gradient(135deg,#e6e6e6,#fdfdfd 70%)"></div><div class="a" style="left:406px;top:274px;width:13px;height:13px;box-sizing:border-box;border:1px solid #b4b4b4;background:linear-gradient(135deg,#e6e6e6,#fdfdfd 70%)"></div><div class="a" style="left:406px;top:293px;width:294px;height:1px;background:#cfcfcf;"></div><div class="a" style="left:565px;top:320px;width:135px;height:25px;background:#fff;border:1px solid #a8a8a8;box-sizing:border-box;"></div><div class="a" style="left:686.6px;top:330.7px;width:0;height:0;border-left:4px solid transparent;border-right:4px solid transparent;border-top:4.2px solid #1a1a1a"></div><div class="a" style="left:625px;top:347px;width:75px;height:25px;background:#fff;border:1px solid #a8a8a8;box-sizing:border-box;"></div><div class="a" style="left:686.6px;top:357.7px;width:0;height:0;border-left:4px solid transparent;border-right:4px solid transparent;border-top:4.2px solid #1a1a1a"></div><div class="a" style="left:618px;top:374px;width:82px;height:23px;background:#fafafa;border:1px solid #e2e2e2;box-sizing:border-box;"></div><div class="a" style="left:406px;top:403px;width:13px;height:13px;box-sizing:border-box;border:1px solid #b4b4b4;background:linear-gradient(135deg,#e6e6e6,#fdfdfd 70%)"></div><div class="a" style="left:406px;top:426px;width:13px;height:13px;box-sizing:border-box;border:1px solid #b4b4b4;background:linear-gradient(135deg,#e6e6e6,#fdfdfd 70%)"></div><div class="a" style="left:406px;top:445px;width:294px;height:1px;background:#cfcfcf;"></div><div class="a" style="left:406px;top:449px;width:294px;height:29px;box-sizing:border-box;border:1.500px solid #9c9c9c;background:#fff"></div><div class="a" style="left:406px;top:700px;width:294px;height:4px;background:#adadad;"></div><div class="a" style="left:628px;top:692px;width:9px;height:19px;background:#4f9fbb;border:1px solid #3f6f82;box-sizing:border-box;"></div><div class="a" style="left:435px;top:736px;width:32px;height:32px;background:#f0f0f0;border:1px solid #adadad;box-sizing:border-box;"></div><div class="a" style="left:469px;top:736px;width:32px;height:32px;background:#f0f0f0;border:1px solid #adadad;box-sizing:border-box;"></div><div class="a" style="left:503px;top:736px;width:32px;height:32px;background:#f0f0f0;border:1px solid #adadad;box-sizing:border-box;"></div><div class="a" style="left:537px;top:736px;width:32px;height:32px;background:#f0f0f0;border:1px solid #adadad;box-sizing:border-box;"></div><div class="a" style="left:571px;top:736px;width:32px;height:32px;background:#f0f0f0;border:1px solid #adadad;box-sizing:border-box;"></div><div class="a" style="left:605px;top:736px;width:32px;height:32px;background:#f0f0f0;border:1px solid #adadad;box-sizing:border-box;"></div><div class="a" style="left:639px;top:736px;width:32px;height:32px;background:#f0f0f0;border:1px solid #d9d9d9;box-sizing:border-box;"></div><div class="a" style="left:588px;top:780px;width:54px;height:25px;background:#6fb3cc;"></div><div class="a" style="left:647px;top:780px;width:54px;height:25px;background:#e1e1e1;border:1px solid #adadad;box-sizing:border-box;"></div><svg class="a" style="left:435px;top:736px" width="240" height="32" viewBox="435 736 240 32"><rect x="440.6" y="744" width="2" height="15" fill="#000070"/><path d="M451.5 744 L443.3 751.500 L451.5 759z" fill="#8b0000"/><path d="M460.7 744 L452 751.500 L460.7 759z" fill="#8b0000"/><rect x="479" y="744" width="2" height="15" fill="#000070"/><path d="M490 744 L481.5 751.500 L490 759z" fill="#8b0000"/><path d="M522.5 744 L514 751.500 L522.5 759z" fill="#8b0000"/><path d="M550 744 L558.5 751.500 L550 759z" fill="#8b0000"/><path d="M582.3 744 L590.7 751.500 L582.3 759z" fill="#8b0000"/><rect x="591.2" y="744" width="2" height="15" fill="#000070"/><path d="M611 744 L619.3 751.500 L611 759z" fill="#8b0000"/><path d="M620 744 L628.3 751.500 L620 759z" fill="#8b0000"/><rect x="629" y="744" width="2" height="15" fill="#000070"/><rect x="649.400" y="746" width="12" height="12" fill="#b09399"/></svg><span class="t" style="left:403.60px;top:-2px;font-size:12.60px;line-height:16px;color:#1a1a1a;letter-spacing:-0.02px;">$$ End Rotary_Point_Vector_Move</span><span class="t" style="left:403.60px;top:15px;font-size:12.60px;line-height:16px;color:#1a1a1a;letter-spacing:-0.03px;">$$ Start Linear_Move_along_Tool_Axis</span><span class="t" style="left:403.60px;top:32px;font-size:12.60px;line-height:16px;color:#1a1a1a;letter-spacing:-0.05px;">GOTO/0.000,0.000,247.000</span><span class="t" style="left:408.30px;top:75px;font-size:12.50px;line-height:16px;color:#1a1a1a;">1</span><span class="t" style="left:404.80px;top:119px;font-size:12.50px;line-height:16px;color:#1a1a1a;">1</span><span class="t" style="left:700.50px;top:119px;font-size:12.50px;line-height:16px;color:#1a1a1a;">6</span><span class="t" style="left:399.3px;top:143.2px;font-size:12px;line-height:12px;color:#1a1a1a">进给率</span><span class="t" style="left:439.50px;top:142px;font-size:12.50px;line-height:16px;color:#1a1a1a;letter-spacing:-0.10px;">0.000000</span><span class="t" style="left:416.0px;top:171.6px;font-size:12px;line-height:12px;color:#1a1a1a">重播</span><span class="t" style="left:462.50px;top:170px;font-size:12.30px;line-height:16px;color:#1a1a1a;">3D</span><span class="t" style="left:482.3px;top:171.6px;font-size:12px;line-height:12px;color:#1a1a1a">动态</span><span class="t" style="left:406.3px;top:201.7px;font-size:12px;line-height:12px;color:#1a1a1a">显示选项</span><span class="t" style="left:406.3px;top:226.6px;font-size:12px;line-height:12px;color:#1a1a1a">刀具</span><span class="t" style="left:654.3px;top:226.9px;font-size:12px;line-height:12px;color:#1a1a1a">刀具</span><span class="t" style="left:424.70px;top:250px;font-size:12.30px;line-height:16px;color:#ababab;">2D</span><span class="t" style="left:444.0px;top:251.7px;font-size:12px;line-height:12px;color:#ababab">除料</span><span class="t" style="left:424.7px;top:274.7px;font-size:12px;line-height:12px;color:#ababab">显示上一个</span><span class="t" style="left:488.70px;top:273px;font-size:12.30px;line-height:16px;color:#ababab;">IPW</span><span class="t" style="left:406.3px;top:301.9px;font-size:12px;line-height:12px;color:#1a1a1a">运动显示</span><span class="t" style="left:406.3px;top:326.6px;font-size:12px;line-height:12px;color:#1a1a1a">刀轨</span><span class="t" style="left:570.3px;top:326.9px;font-size:12px;line-height:12px;color:#1a1a1a">全部</span><span class="t" style="left:406.3px;top:353.9px;font-size:12px;line-height:12px;color:#1a1a1a">刀具轨迹</span><span class="t" style="left:630.3px;top:353.9px;font-size:12px;line-height:12px;color:#1a1a1a">工具提示</span><span class="t" style="left:406.3px;top:379.9px;font-size:12px;line-height:12px;color:#ababab">运动数</span><span class="t" style="left:677.00px;top:377px;font-size:15.00px;line-height:19px;color:#8f8f8f;">10</span><span class="t" style="left:424.7px;top:404.0px;font-size:12px;line-height:12px;color:#ababab">在每一层暂停</span><span class="t" style="left:424.7px;top:427.0px;font-size:12px;line-height:12px;color:#ababab">显示刀具接触</span><span class="t" style="left:511.0px;top:457.7px;font-size:12px;line-height:12px;color:#1a1a1a">过切和碰撞设置</span><span class="t" style="left:399.3px;top:651.6px;font-size:12px;line-height:12px;color:#1a1a1a">动画速度</span><span class="t" style="left:628.30px;top:672px;font-size:12.50px;line-height:16px;color:#1a1a1a;">8</span><span class="t" style="left:404.80px;top:716px;font-size:12.50px;line-height:16px;color:#1a1a1a;">1</span><span class="t" style="left:693.30px;top:716px;font-size:12.50px;line-height:16px;color:#1a1a1a;">10</span><span class="t" style="left:603.0px;top:786.7px;font-size:12px;line-height:12px;color:#fff">确定</span><span class="t" style="left:662.3px;top:786.7px;font-size:12px;line-height:12px;color:#1a1a1a">取消</span></body></html>
